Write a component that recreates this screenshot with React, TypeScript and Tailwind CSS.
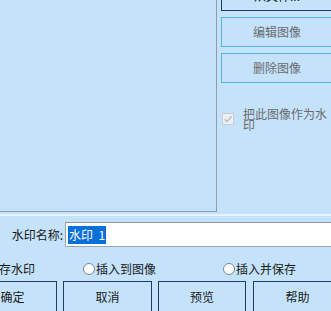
import React from "react";

const font = { fontFamily: '"Noto Sans CJK SC", "Noto Sans", sans-serif' };

function Radio({ label, className = "" }: { label: string; className?: string }) {
  return (
    <div className={"flex items-center shrink-0 " + className}>
      <span className="w-[12px] h-[12px] rounded-full border border-[#7a8796] bg-white shrink-0" />
      <span className="ml-[1px] text-[12px] leading-[16px] text-[#1a1a1a] whitespace-nowrap">{label}</span>
    </div>
  );
}

export default function App() {
  return (
    <div
      className="w-[331px] h-[311px] overflow-hidden bg-[#c4e3fb] flex flex-col select-none"
      style={font}
    >
      {/* preview + side buttons */}
      <div className="flex h-[212px] shrink-0">
        <div className="w-[217px] h-[212px] border-r border-b border-[#8e9cab] shrink-0" />
        <div className="flex flex-col pl-[4px] gap-[6px] -mt-[19px]">
          <button className="w-[112px] h-[30px] border border-[#1d3d66] bg-[#c4e3fb] text-[12px] text-[#1a1a1a] shrink-0">
            从文件...
          </button>
          <button className="w-[112px] h-[30px] border border-[#55b3dd] bg-[#c4e3fb] text-[12px] text-[#6b6b6b] shrink-0">
            编辑图像
          </button>
          <button className="w-[112px] h-[30px] border border-[#55b3dd] bg-[#c4e3fb] text-[12px] text-[#6b6b6b] shrink-0">
            删除图像
          </button>
          <div className="flex items-start mt-[19px] pl-[1px]">
            <span className="mt-[5px] w-[12px] h-[12px] border border-[#c9ccd0] bg-[#eef1f4] flex items-center justify-center shrink-0">
              <svg width="10" height="10" viewBox="0 0 10 10">
                <path d="M1.5 5.2 L4 7.6 L8.6 2.2" fill="none" stroke="#b9bdc2" strokeWidth="1.4" />
              </svg>
            </span>
            <span className="ml-[9px] w-[88px] text-[12px] leading-[11px] text-[#6b6b6b] break-all">
              把此图像作为水印
            </span>
          </div>
        </div>
      </div>

      {/* etched separator */}
      <div className="h-[2px] mt-[2px] bg-[#e6f3fd] shrink-0" />

      {/* name row */}
      <div className="flex items-center h-[25px] mt-[6px] shrink-0">
        <div className="w-[65px] pr-[2px] text-right text-[12px] text-[#1a1a1a] whitespace-nowrap shrink-0">
          水印名称:
        </div>
        <div className="w-[280px] h-[25px] border border-[#9aa5b0] border-t-[#8a949e] bg-white flex items-center pl-[2px] shrink-0">
          <span className="bg-[#0a6fd6] text-white text-[12px] leading-[18px] px-[1px] whitespace-pre">水印  1</span>
        </div>
      </div>

      {/* radio row */}
      <div className="flex items-center h-[18px] mt-[13px] shrink-0">
        <Radio label="保存水印" className="-ml-[26px]" />
        <Radio label="插入到图像" className="ml-[48px]" />
        <Radio label="插入并保存" className="ml-[67px]" />
      </div>

      {/* dialog buttons */}
      <div className="flex mt-[3px] shrink-0">
        <button className="-ml-[32px] w-[89px] h-[32px] border border-[#1d3d66] text-[12px] text-[#1a1a1a] shrink-0">
          确定
        </button>
        <button className="ml-[6px] w-[89px] h-[32px] border border-[#1d3d66] text-[12px] text-[#1a1a1a] shrink-0">
          取消
        </button>
        <button className="ml-[6px] w-[88px] h-[32px] border border-[#1d3d66] text-[12px] text-[#1a1a1a] shrink-0">
          预览
        </button>
        <button className="ml-[7px] w-[89px] h-[32px] border border-[#1d3d66] text-[12px] text-[#1a1a1a] shrink-0">
          帮助
        </button>
      </div>
    </div>
  );
}
